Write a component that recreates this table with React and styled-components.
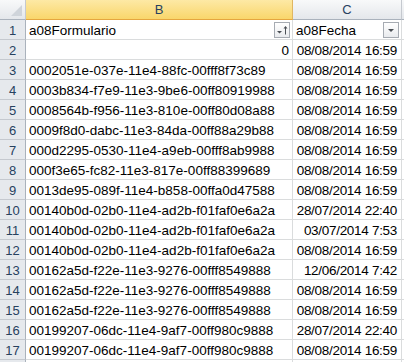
import styled, { createGlobalStyle, css } from 'styled-components'

const GlobalStyle = createGlobalStyle`
  html, body {
    margin: 0;
    padding: 0;
    background: #ffffff;
    overflow: hidden;
  }
`

const rows = [
  ['0002051e-037e-11e4-88fc-00fff8f73c89', '08/08/2014 16:59'],
  ['0003b834-f7e9-11e3-9be6-00ff80919988', '08/08/2014 16:59'],
  ['0008564b-f956-11e3-810e-00ff80d08a88', '08/08/2014 16:59'],
  ['0009f8d0-dabc-11e3-84da-00ff88a29b88', '08/08/2014 16:59'],
  ['000d2295-0530-11e4-a9eb-00fff8ab9988', '08/08/2014 16:59'],
  ['000f3e65-fc82-11e3-817e-00ff88399689', '08/08/2014 16:59'],
  ['0013de95-089f-11e4-b858-00ffa0d47588', '08/08/2014 16:59'],
  ['00140b0d-02b0-11e4-ad2b-f01faf0e6a2a', '28/07/2014 22:40'],
  ['00140b0d-02b0-11e4-ad2b-f01faf0e6a2a', '03/07/2014 7:53'],
  ['00140b0d-02b0-11e4-ad2b-f01faf0e6a2a', '08/08/2014 16:59'],
  ['00162a5d-f22e-11e3-9276-00fff8549888', '12/06/2014 7:42'],
  ['00162a5d-f22e-11e3-9276-00fff8549888', '08/08/2014 16:59'],
  ['00162a5d-f22e-11e3-9276-00fff8549888', '08/08/2014 16:59'],
  ['00199207-06dc-11e4-9af7-00ff980c9888', '28/07/2014 22:40'],
  ['00199207-06dc-11e4-9af7-00ff980c9888', '08/08/2014 16:59'],
]

const Sheet = styled.div`
  display: grid;
  grid-template-columns: 26px 267px 109px 1fr;
  grid-auto-rows: 20px;
  width: 404px;
  height: 362px;
  overflow: hidden;
  font-family: 'Liberation Sans', Arial, sans-serif;
  font-size: 13.5px;
  color: #000000;
`

const ColHeader = styled.div`
  box-sizing: border-box;
  display: flex;
  align-items: center;
  justify-content: center;
  border-right: 1px solid #c5c9cf;
  border-bottom: 1px solid #aab2bc;
  background: linear-gradient(#f8f9fa, #e4e7eb);
  color: #27415f;
  font-size: 13px;
  ${(p) =>
    p.$active &&
    css`
      background: linear-gradient(#fde9a5, #f9d66b);
      border-bottom-color: #e5a63f;
      border-right-color: #e0b662;
    `}
`

const Corner = styled(ColHeader)`
  justify-content: flex-end;
  align-items: flex-end;
  padding: 0 3px 3px 0;
`

const RowHeader = styled.div`
  box-sizing: border-box;
  display: flex;
  align-items: center;
  justify-content: center;
  padding-top: 1px;
  border-right: 1px solid #aab2bc;
  border-bottom: 1px solid #c5c9cf;
  background: #e6e9ed;
  color: #27415f;
  font-size: 13px;
`

const Cell = styled.div`
  box-sizing: border-box;
  display: flex;
  align-items: center;
  justify-content: ${(p) => (p.$right ? 'flex-end' : 'flex-start')};
  gap: 2px;
  padding: 1px 3px 0 3px;
  border-right: 1px solid #dadcdd;
  border-bottom: 1px solid #dadcdd;
  white-space: nowrap;
  overflow: hidden;
`

const DateCell = styled(Cell)`
  letter-spacing: -0.3px;
  padding-right: 4px;
`

const HeadCell = styled(Cell)`
  padding-right: 2px;
  justify-content: space-between;
`

const FilterButton = styled.div`
  box-sizing: border-box;
  flex: none;
  width: 16px;
  height: 16px;
  display: flex;
  align-items: center;
  justify-content: center;
  border: 1px solid #a6abb2;
  background: linear-gradient(#ffffff, #e9ebee);
`

function DropArrow() {
  return (
    <svg width="14" height="14" viewBox="0 0 14 14">
      <path d="M4 6h6l-3 3z" fill="#4a4f55" />
    </svg>
  )
}

function SortedArrow() {
  return (
    <svg width="14" height="14" viewBox="0 0 14 14">
      <path d="M2 8h5l-2.5 2.5z" fill="#4a4f55" />
      <path d="M10.5 3l-2 2.5h1.5v6h1v-6h1.5z" fill="#4a4f55" />
    </svg>
  )
}

function Row({ n, id, date }) {
  return (
    <>
      <RowHeader>{n}</RowHeader>
      <Cell>{id}</Cell>
      <DateCell $right>{date}</DateCell>
      <Cell />
    </>
  )
}

export default function App() {
  return (
    <>
      <GlobalStyle />
      <Sheet>
        <Corner>
          <svg width="11" height="11" viewBox="0 0 11 11">
            <path d="M11 0v11H0z" fill="#cfd4da" />
          </svg>
        </Corner>
        <ColHeader $active>B</ColHeader>
        <ColHeader>C</ColHeader>
        <ColHeader />

        <RowHeader>1</RowHeader>
        <HeadCell>
          <span>a08Formulario</span>
          <FilterButton>
            <SortedArrow />
          </FilterButton>
        </HeadCell>
        <HeadCell>
          <span>a08Fecha</span>
          <FilterButton>
            <DropArrow />
          </FilterButton>
        </HeadCell>
        <Cell />

        <RowHeader>2</RowHeader>
        <Cell $right>0</Cell>
        <DateCell $right>08/08/2014 16:59</DateCell>
        <Cell />

        {rows.map(([id, date], i) => (
          <Row key={i} n={i + 3} id={id} date={date} />
        ))}

        <RowHeader />
        <Cell />
        <Cell />
        <Cell />
      </Sheet>
    </>
  )
}
